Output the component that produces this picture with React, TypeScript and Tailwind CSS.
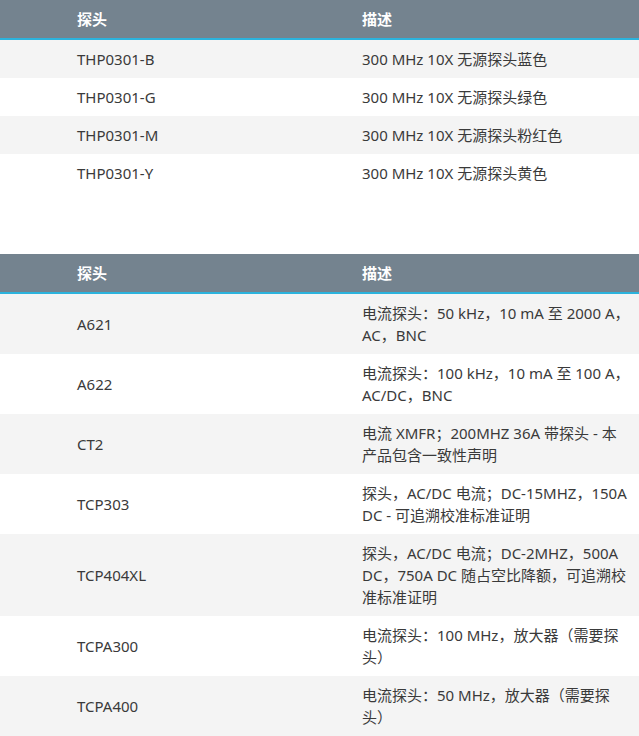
const shortProbes = [
  { name: 'THP0301-B', desc: '300 MHz 10X 无源探头蓝色' },
  { name: 'THP0301-G', desc: '300 MHz 10X 无源探头绿色' },
  { name: 'THP0301-M', desc: '300 MHz 10X 无源探头粉红色' },
  { name: 'THP0301-Y', desc: '300 MHz 10X 无源探头黄色' },
];

// non-breaking spaces keep "2000 A" / "100 A" together, as in the source page
const currentProbes = [
  { name: 'A621', desc: '电流探头：50 kHz，10 mA 至 2000\u00a0A，AC，BNC' },
  { name: 'A622', desc: '电流探头：100 kHz，10 mA 至 100\u00a0A，AC/DC，BNC' },
  { name: 'CT2', desc: '电流 XMFR；200MHZ 36A 带探头 - 本产品包含一致性声明' },
  { name: 'TCP303', desc: '探头，AC/DC 电流；DC-15MHZ，150A DC - 可追溯校准标准证明' },
  { name: 'TCP404XL', desc: '探头，AC/DC 电流；DC-2MHZ，500A DC，750A DC 随占空比降额，可追溯校准标准证明' },
  { name: 'TCPA300', desc: '电流探头：100 MHz，放大器（需要探头）' },
  { name: 'TCPA400', desc: '电流探头：50 MHz，放大器（需要探头）' },
];

interface Row {
  name: string;
  desc: string;
}

function ProbeTable({ rows }: { rows: Row[] }) {
  return (
    <div className="w-full">
      <div className="grid grid-cols-[362px_1fr] bg-[#74838f] border-b-2 border-[#2bb3dd] text-white font-bold leading-[22px] py-2">
        <div className="pl-[77px]">探头</div>
        <div>描述</div>
      </div>
      {rows.map((r, i) => (
        <div
          key={r.name}
          className={`grid grid-cols-[362px_1fr] items-center py-2 leading-[22px] text-[#3a3a3a] ${i % 2 === 0 ? 'bg-[#f4f4f4]' : 'bg-white'}`}
        >
          <div className="pl-[77px]">{r.name}</div>
          <div className="pr-[8px]">{r.desc}</div>
        </div>
      ))}
    </div>
  );
}

export default function App() {
  return (
    <div className="w-[639px] bg-white text-[15px] font-['Noto_Sans','Noto_Sans_CJK_SC',sans-serif]">
      <ProbeTable rows={shortProbes} />
      <div className="h-[62px]" />
      <ProbeTable rows={currentProbes} />
    </div>
  );
}
